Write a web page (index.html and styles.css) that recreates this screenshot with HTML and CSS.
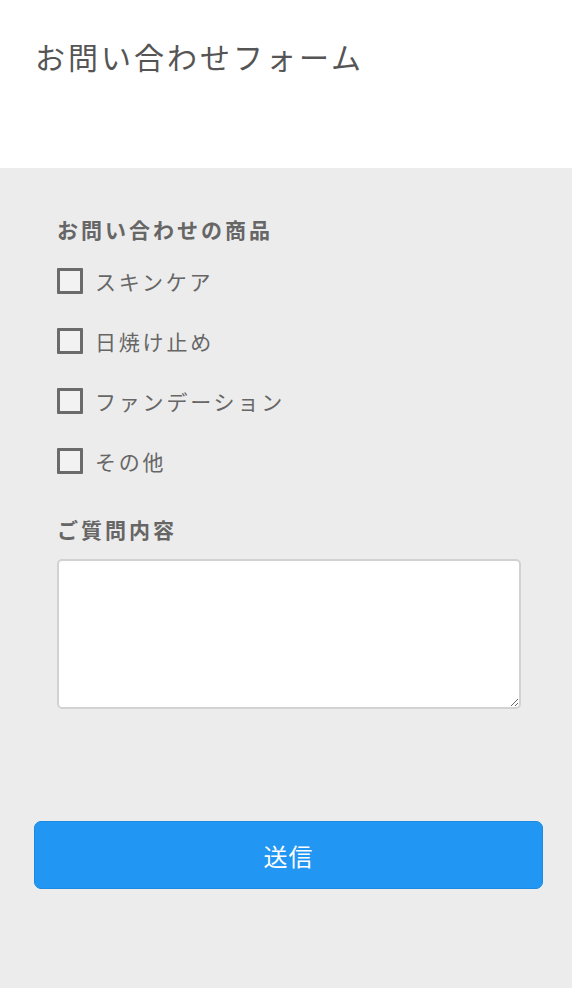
FILE: index.html
```html
<!DOCTYPE html>
<html lang="ja">
<head>
    <meta charset="UTF-8">
    <meta name="viewport" content="width=device-width, initial-scale=1.0">
    <title>お問い合わせフォーム</title>
    <link rel="stylesheet" href="styles.css">
</head>
<body>
    <div class="header">
        <h1>お問い合わせフォーム</h1>
    </div>
    <form class="contact-form">
        <div class="field">
            <p class="field-label">お問い合わせの商品</p>
            <label class="check-row"><input type="checkbox" name="item" value="skincare"><span>スキンケア</span></label>
            <label class="check-row"><input type="checkbox" name="item" value="sunscreen"><span>日焼け止め</span></label>
            <label class="check-row"><input type="checkbox" name="item" value="foundation"><span>ファンデーション</span></label>
            <label class="check-row"><input type="checkbox" name="item" value="other"><span>その他</span></label>
        </div>
        <div class="field">
            <p class="field-label">ご質問内容</p>
            <textarea name="question"></textarea>
        </div>
        <button type="submit">送信</button>
    </form>
</body>
</html>
```

FILE: styles.css
```css
body {
    margin: 0;
    font-family: "Noto Sans CJK JP", "Noto Sans", sans-serif;
    color: #606060;
    background-color: #ececec;
}
.header {
    background-color: white;
    height: 168px;
    box-sizing: border-box;
    padding: 34px 0 0 35px;
}
.header h1 {
    margin: 0;
    font-size: 30px;
    line-height: 45px;
    font-weight: normal;
    letter-spacing: 3px;
    color: #555;
}
.contact-form {
    padding: 46px 29px 99px 34px;
}
.field {
    padding-left: 23px;
}
.field-label {
    margin: 0;
    font-size: 21px;
    line-height: 30px;
    font-weight: bold;
    letter-spacing: 3px;
    color: #666;
}
.check-row {
    display: flex;
    align-items: center;
    height: 60px;
    font-size: 21px;
    letter-spacing: 2.8px;
    color: #666;
}
.check-row:first-of-type {
    margin-top: 7px;
}
.check-row input {
    appearance: none;
    -webkit-appearance: none;
    margin: 0 12px 0 0;
    width: 26px;
    height: 26px;
    border: 3px solid #6a6a6a;
    border-radius: 1px;
    background-color: #f2f2f2;
    box-sizing: border-box;
}
.field + .field {
    margin-top: 23px;
}
textarea {
    display: block;
    margin-top: 15px;
    width: 464px;
    height: 150px;
    box-sizing: border-box;
    border: 2px solid #d2d2d2;
    border-radius: 5px;
    background-color: white;
}
button {
    display: block;
    margin-top: 112px;
    width: 509px;
    height: 68px;
    background-color: #2196f3;
    color: white;
    border: 1px solid #1c8ae0;
    border-radius: 7px;
    font-family: "Noto Sans CJK JP", sans-serif;
    font-size: 24px;
    letter-spacing: 1px;
    cursor: pointer;
}
```
